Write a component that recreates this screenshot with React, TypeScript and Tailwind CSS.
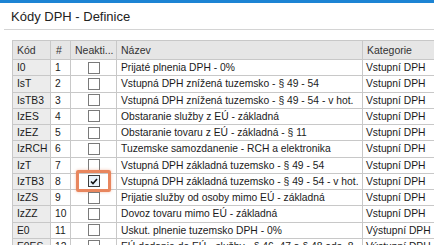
import React from "react";

type Row = { kod: string; n: number; checked?: boolean; nazev: string; kat: string };

const rows: Row[] = [
  { kod: "I0", n: 1, nazev: "Prijaté plnenia DPH - 0%", kat: "Vstupní DPH" },
  { kod: "IsT", n: 2, nazev: "Vstupná DPH znížená tuzemsko - § 49 - 54", kat: "Vstupní DPH" },
  { kod: "IsTB3", n: 3, nazev: "Vstupná DPH znížená tuzemsko - § 49 - 54 - v hot.", kat: "Vstupní DPH" },
  { kod: "IzES", n: 4, nazev: "Obstaranie služby z EÚ - základná", kat: "Vstupní DPH" },
  { kod: "IzEZ", n: 5, nazev: "Obstaranie tovaru z EÚ - základná - § 11", kat: "Vstupní DPH" },
  { kod: "IzRCH", n: 6, nazev: "Tuzemske samozdanenie - RCH a elektronika", kat: "Vstupní DPH" },
  { kod: "IzT", n: 7, nazev: "Vstupná DPH základná tuzemsko - § 49 - 54", kat: "Vstupní DPH" },
  { kod: "IzTB3", n: 8, checked: true, nazev: "Vstupná DPH základná tuzemsko - § 49 - 54 - v hot.", kat: "Vstupní DPH" },
  { kod: "IzZS", n: 9, nazev: "Prijatie služby od osoby mimo EÚ - základná", kat: "Vstupní DPH" },
  { kod: "IzZZ", n: 10, nazev: "Dovoz tovaru mimo EÚ - základná", kat: "Vstupní DPH" },
  { kod: "E0", n: 11, nazev: "Uskut. plnenie tuzemsko DPH - 0%", kat: "Výstupní DPH" },
  { kod: "E0ES", n: 12, nazev: "EÚ dodanie do EÚ - služby - § 46, 47 a § 48 ods. 8", kat: "Výstupní DPH" },
];

const cols = "grid grid-cols-[38px_20px_46px_246px_90px]";

function Checkbox({ checked }: { checked?: boolean }) {
  return (
    <div
      className={`w-[12px] h-[12px] border flex items-center justify-center ${
        checked ? "bg-[#eaf3fb] border-[#3c3c3c]" : "bg-white border-[#7a7a7a]"
      }`}
    >
      {checked && (
        <svg width="8" height="7" viewBox="0 0 8 7">
          <path d="M1 3.5 L3 5.5 L7 1" fill="none" stroke="#111" strokeWidth="1.6" />
        </svg>
      )}
    </div>
  );
}

export default function App() {
  return (
    <div className="w-[434px] h-[245px] bg-white overflow-hidden relative" style={{ fontFamily: "'Liberation Sans', Arial, sans-serif" }}>
      <div className="h-[3px] bg-[#1c84d4]" />
      <div className="h-[26px] pl-[11px] pt-[6px] text-[13px] leading-[15px] text-[#222]">
        Kódy DPH - Definice
      </div>
      <div className="ml-[4px] h-px bg-[#d4d4d4]" />
      <div className="pl-[12px] pt-[10px]">
        <div className="w-[440px] border-l border-t border-[#c8c8c8]">
          <div className={`${cols} h-[19px] bg-[#e6e6e6] text-[10.5px] text-[#333] border-b border-[#c8c8c8]`}>
            <div className="border-r border-[#c8c8c8] pl-[4px] leading-[18px]">Kód</div>
            <div className="border-r border-[#c8c8c8] pl-[5px] leading-[18px]">#</div>
            <div className="border-r border-[#c8c8c8] pl-[4px] leading-[18px]">Neakti...</div>
            <div className="border-r border-[#c8c8c8] pl-[4px] leading-[18px]">Název</div>
            <div className="border-r border-[#c8c8c8] pl-[4px] leading-[18px]">Kategorie</div>
          </div>
          {rows.map((r) => (
            <div key={r.n} className={`${cols} h-[16.25px] text-[10.3px] text-[#1a1a1a] border-b border-[#c8c8c8]`}>
              <div className="bg-[#ececec] border-r border-[#c8c8c8] pl-[4px] leading-[15px]">{r.kod}</div>
              <div className="border-r border-[#c8c8c8] pl-[4px] leading-[15px]">{r.n}</div>
              <div className="border-r border-[#c8c8c8] flex items-center justify-center relative">
                <Checkbox checked={r.checked} />
                {r.checked && (
                  <div className="absolute left-[5px] top-[-4px] w-[35px] h-[22px] border-[3px] border-[#e8865e] rounded-[2px] shadow-[0_0_3px_rgba(232,134,94,0.5)]" />
                )}
              </div>
              <div className="border-r border-[#c8c8c8] pl-[4px] leading-[15px] whitespace-nowrap overflow-hidden">{r.nazev}</div>
              <div className="border-r border-[#c8c8c8] pl-[3px] leading-[15px] whitespace-nowrap">{r.kat}</div>
            </div>
          ))}
        </div>
      </div>
    </div>
  );
}
